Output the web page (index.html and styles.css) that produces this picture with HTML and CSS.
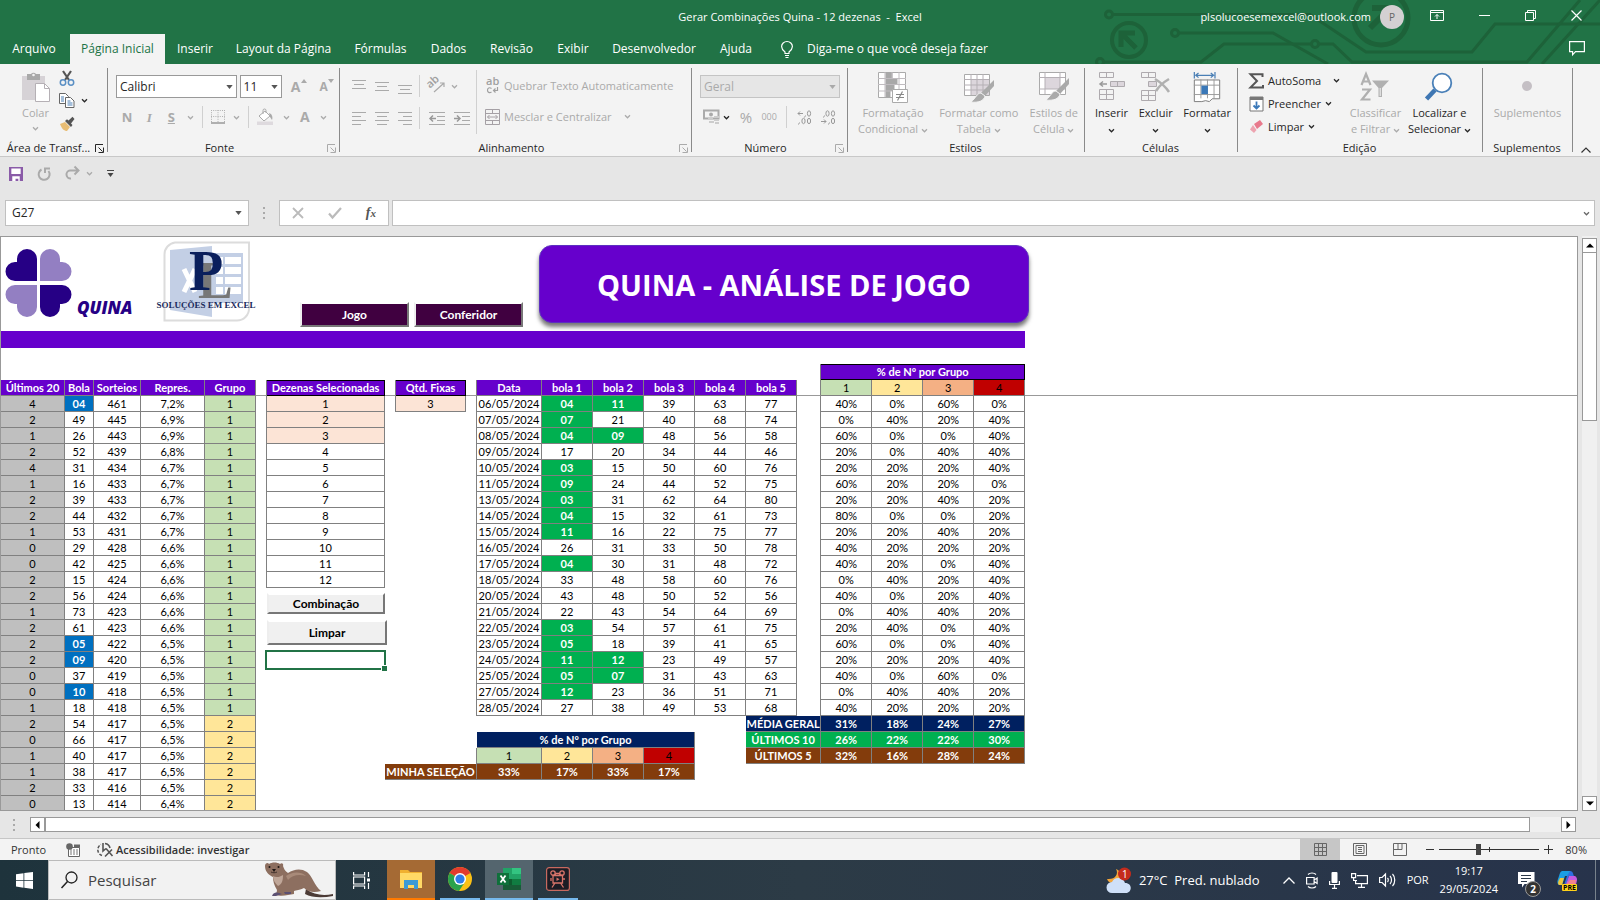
FILE: index.html
```html
<!DOCTYPE html>
<html lang="pt-BR">
<head>
<meta charset="utf-8">
<title>Gerar Combinações Quina - 12 dezenas - Excel</title>
<link rel="stylesheet" href="styles.css">
</head>
<body>
<svg class="defs" aria-hidden="true">
  <symbol id="chev" viewBox="0 0 8 6"><path d="M1 1.500 4 4.500 7 1.500" fill="none" stroke="currentColor" stroke-width="1.500"/></symbol>
  <symbol id="tri" viewBox="0 0 8 5"><path d="M0 0h8L4 5z" fill="currentColor"/></symbol>
  <symbol id="launch" viewBox="0 0 9 9"><path d="M.5 8V.5H8M3.500 3.500 7.500 7.500M8.500 3.500v5h-5" fill="none" stroke="currentColor"/></symbol>
</svg>

<header class="top">
  <svg class="circuit" viewBox="0 0 540 64" aria-hidden="true">
    <g fill="none" stroke="#1d6239" stroke-width="3">
      <circle cx="49" cy="14.500" r="3.500"/><path d="M53 14.500H250L306 52H412L435 24H540"/>
      <circle cx="115" cy="33" r="3.500"/><path d="M119 33H213L268 64"/>
      <circle cx="255" cy="44" r="3.500"/><path d="M251 44H164L141 62H44M259 44H273L292 62H467L520 0M482 64 540 0"/>
      <circle cx="40" cy="62" r="3.500"/>
      <circle cx="69" cy="40" r="17" stroke-width="4"/><path d="M61 47V33H75M62 34 76 48" stroke-width="5"/>
      <circle cx="321" cy="18" r="27" stroke-width="5"/><path d="M312 8H330V26M329 9 310 28" stroke-width="6"/>
    </g>
  </svg>
  <div class="title-row">
    <h1 class="title">Gerar Combinações Quina - 12 dezenas &nbsp;-&nbsp; Excel</h1>
    <div class="account"><span>plsolucoesemexcel@outlook.com</span><span class="avatar">P</span></div>
    <div class="win">
      <button aria-label="Opções da faixa"><svg width="14" height="11" viewBox="0 0 14 11"><path d="M.5.500h13v10H.5zM.5 2.500h13M7 9V4.500M5 6.500l2-2 2 2" fill="none" stroke="#fff"/></svg></button>
      <button aria-label="Minimizar"><svg width="11" height="11" viewBox="0 0 11 11"><path d="M0 5.500h11" stroke="#fff"/></svg></button>
      <button aria-label="Restaurar"><svg width="11" height="11" viewBox="0 0 11 11"><path d="M.5 2.500h8v8h-8zM2.500 2.500v-2h8v8h-2" fill="none" stroke="#fff"/></svg></button>
      <button aria-label="Fechar"><svg width="11" height="11" viewBox="0 0 11 11"><path d="M.5.500l10 10M10.500.500l-10 10" stroke="#fff" stroke-width="1.200"/></svg></button>
    </div>
  </div>
  <div class="tab-row">
    <nav class="tabs">
      <button>Arquivo</button><button class="on">Página Inicial</button><button>Inserir</button><button>Layout da Página</button><button>Fórmulas</button><button>Dados</button><button>Revisão</button><button>Exibir</button><button>Desenvolvedor</button><button>Ajuda</button>
      <button class="tell"><svg width="12" height="17" viewBox="0 0 12 17"><path d="M4 12.500V11C1.500 9 .6 7.500.6 5.500a5.400 5 0 0 1 10.800 0C11.400 7.500 10.500 9 8 11v1.500zM4 14.500h4M4.500 16.500h3" fill="none" stroke="#fff" stroke-width="1.200"/></svg>Diga-me o que você deseja fazer</button>
    </nav>
    <button class="comment" aria-label="Comentários"><svg width="16" height="15" viewBox="0 0 16 15"><path d="M.6.600h14.800v10H6.500L3.600 13.800V10.600h-3z" fill="none" stroke="#fff" stroke-width="1.200"/></svg></button>
  </div>
</header>

<section class="ribbon">
  <div class="group g-clip">
    <div class="body">
      <button class="big dis"><svg width="30" height="31" viewBox="0 0 30 31"><path d="M1 4h23v24H1z" fill="#d6d2d6"/><path d="M6 2h4a3 3 0 0 1 5 0h4v6H6z" fill="#a9a9a9"/><circle cx="12.500" cy="3" r="1.300" fill="#f3f3f3"/><path d="M14.500 11.500h9l5 5v13h-14z" fill="#fff" stroke="#b5b0b5"/><path d="M23.500 11.500v5h5" fill="none" stroke="#b5b0b5"/></svg><span>Colar</span><svg class="cv"><use href="#chev"/></svg></button>
      <div class="stack">
        <button aria-label="Recortar"><svg width="16" height="16" viewBox="0 0 16 16"><path d="M4 1l6 9M12 1 6 10" stroke="#555" stroke-width="2.200"/><circle cx="4" cy="12.500" r="2.700" fill="none" stroke="#5a8fc4" stroke-width="1.500"/><circle cx="12" cy="12.500" r="2.700" fill="none" stroke="#5a8fc4" stroke-width="1.500"/></svg></button>
        <button aria-label="Copiar"><svg width="16" height="15" viewBox="0 0 16 15"><path d="M.5.500h6l3 3v7h-9z" fill="#fff" stroke="#666"/><path d="M6.500 4.500h5l3.500 3.500v6.500H6.500z" fill="#fff" stroke="#666"/><path d="M2 4h3M2 6h3M2 8h3M8.500 8h3M8.500 10h5M8.500 12h5" stroke="#4a7fb5"/></svg><svg class="cv"><use href="#chev"/></svg></button>
        <button aria-label="Pincel"><svg width="16" height="16" viewBox="0 0 16 16"><path d="M1 8l5-2 5 5-3 4c-3 0-5-2-7-7z" fill="#e8bd74"/><path d="M6 5l6 6 1.500-2L12 7.500 15.500 3 13.500.800 9.500 4.500 8 3.200z" fill="#555"/></svg></button>
      </div>
    </div>
    <div class="label"><span>Área de Transf...</span><svg class="la"><use href="#launch"/></svg></div>
  </div>

  <div class="group g-font">
    <div class="body rows">
      <div class="line">
        <span class="combo w-font"><select aria-label="Fonte"><option>Calibri</option></select><svg class="tr"><use href="#tri"/></svg></span>
        <span class="combo w-size"><select aria-label="Tamanho"><option>11</option></select><svg class="tr"><use href="#tri"/></svg></span>
        <button class="dis grow" aria-label="Aumentar fonte"><b class="fa">A</b><svg width="6" height="4" viewBox="0 0 6 4"><path d="M0 4h6L3 0z" fill="#aaa"/></svg></button>
        <button class="dis grow" aria-label="Diminuir fonte"><b class="fb">A</b><svg width="6" height="4" viewBox="0 0 6 4"><path d="M0 0h6L3 4z" fill="#aaa"/></svg></button>
      </div>
      <div class="line line2 dis">
        <button class="ltr"><b>N</b></button><button class="ltr"><i>I</i></button><button class="ltr"><u>S</u></button><svg class="cv"><use href="#chev"/></svg><span class="vs"></span>
        <button aria-label="Bordas"><svg width="14" height="14" viewBox="0 0 14 14"><path d="M.5 0v13M7 0v13M13.500 0v13M0 .5h14M0 6.500h14" stroke="#b0b0b0" stroke-dasharray="1 1.200" fill="none"/><path d="M0 13h14" stroke="#999" stroke-width="1.500"/></svg></button><svg class="cv"><use href="#chev"/></svg><span class="vs"></span>
        <button aria-label="Preenchimento"><svg width="17" height="16" viewBox="0 0 17 16"><path d="M2 7l6-5 5 5-6 5z" fill="#fff" stroke="#aaa"/><path d="M6 5V1.500a1.500 1.500 0 0 1 3 0V4" fill="none" stroke="#aaa"/><path d="M12 4c3 1 4 4 3 7l-2-3z" fill="#aaa"/><path d="M0 12.500h16V16H0z" fill="#dedade"/></svg></button><svg class="cv"><use href="#chev"/></svg>
        <button class="ltr"><b class="fa">A</b></button><svg class="cv"><use href="#chev"/></svg>
      </div>
    </div>
    <div class="label"><span>Fonte</span><svg class="la dis"><use href="#launch"/></svg></div>
  </div>

  <div class="group g-align">
    <div class="body cols dis">
      <div class="al-left">
        <div class="al-row"><svg width="14" height="12" viewBox="0 0 14 12"><path d="M0 .5h14M2 4.500h10M0 8.500h14" stroke="#aaa"/></svg><svg width="14" height="12" viewBox="0 0 14 12"><path d="M0 2.500h14M2 6.500h10M0 10.500h14" stroke="#aaa"/></svg><svg width="14" height="16" viewBox="0 0 14 16"><path d="M0 7.500h14M2 11.500h10M0 15.500h14" stroke="#aaa"/></svg><span class="vs"></span><svg width="16" height="16" viewBox="0 0 16 16"><text x="0" y="8" font-size="11" font-weight="600" transform="rotate(-42 4 8)" fill="#a0a0a0">ab</text><path d="M5 14 14.500 5.500M11 5h4v4" fill="none" stroke="#aaa" stroke-width="1.200"/></svg><svg class="cv"><use href="#chev"/></svg></div>
        <div class="al-row"><svg width="14" height="13" viewBox="0 0 14 13"><path d="M0 .5h14M0 4.500h9M0 8.500h14M0 12.500h9" stroke="#aaa"/></svg><svg width="14" height="13" viewBox="0 0 14 13"><path d="M0 .5h14M2 4.500h10M0 8.500h14M2 12.500h10" stroke="#aaa"/></svg><svg width="14" height="13" viewBox="0 0 14 13"><path d="M0 .5h14M5 4.500h9M0 8.500h14M5 12.500h9" stroke="#aaa"/></svg><span class="vs"></span><svg width="16" height="13" viewBox="0 0 16 13"><path d="M0 .5h16M8 4.500h8M8 8.500h8M0 12.500h16" stroke="#aaa"/><path d="M7 6.500H1M4 3.500l-3 3 3 3" fill="none" stroke="#999" stroke-width="1.500"/></svg><svg width="16" height="13" viewBox="0 0 16 13"><path d="M0 .5h16M8 4.500h8M8 8.500h8M0 12.500h16" stroke="#aaa"/><path d="M0 6.500h6M3 3.500l3 3-3 3" fill="none" stroke="#999" stroke-width="1.500"/></svg></div>
      </div>
      <div class="al-right">
        <button><svg width="15" height="16" viewBox="0 0 15 16"><text x="1" y="7" font-size="11" font-weight="600" fill="#a0a0a0">ab</text><path d="M6.500 10.500C4.500 9 2.500 10 2.500 12.200S4.500 15.300 6.500 14M12.500 9v3.500H8.500M10.500 10.500l-2 2 2 2" fill="none" stroke="#a0a0a0" stroke-width="1.200"/></svg>Quebrar Texto Automaticamente</button>
        <button><svg width="15" height="16" viewBox="0 0 15 16"><path d="M.5.500h14v15H.5zM.5 4.500h14M.5 11.500h14M7.500.500v4M7.500 11.500v4M2.500 8h10M4.500 6l-2 2 2 2M10.500 6l2 2-2 2" fill="none" stroke="#a5a0a5"/></svg>Mesclar e Centralizar <svg class="cv far"><use href="#chev"/></svg></button>
      </div>
    </div>
    <div class="label"><span>Alinhamento</span><svg class="la dis"><use href="#launch"/></svg></div>
  </div>

  <div class="group g-num">
    <div class="body rows">
      <div class="line"><span class="combo w-num off"><select aria-label="Formato" disabled><option>Geral</option></select><svg class="tr"><use href="#tri"/></svg></span></div>
      <div class="line line2 dis">
        <svg width="17" height="16" viewBox="0 0 17 16"><path d="M1 1.500h14.500v8H1z" fill="none" stroke="#aaa" stroke-width="2"/><circle cx="8" cy="5.500" r="2" fill="#aaa"/><path d="M5 10h5M6 13h5M11 8h5M11 11h5M12 14h4" stroke="#ccc" stroke-width="2"/></svg><svg class="cv dark"><use href="#chev"/></svg>
        <span class="pct">%</span><span class="mil">000</span><span class="vs"></span>
        <svg width="15" height="15" viewBox="0 0 15 15"><g fill="none" stroke="#999"><path d="M6 3.500H1M3 1.500l-2 2 2 2M8.500 5.500l-1 2M2.500 12.500l-1 2"/><ellipse cx="12" cy="3.500" rx="1.600" ry="2.700"/><ellipse cx="6.500" cy="11" rx="1.600" ry="2.700"/><ellipse cx="12" cy="11" rx="1.600" ry="2.700"/></g></svg>
        <svg width="15" height="15" viewBox="0 0 15 15"><g fill="none" stroke="#999"><path d="M0 11.500h5M3 9.500l2 2-2 2M8.500 12.500l-1 2M3.500 5.500l-1 2"/><ellipse cx="12" cy="3.500" rx="1.600" ry="2.700"/><ellipse cx="6.500" cy="3.500" rx="1.600" ry="2.700"/><ellipse cx="12" cy="11" rx="1.600" ry="2.700"/></g></svg>
      </div>
    </div>
    <div class="label"><span>Número</span><svg class="la dis"><use href="#launch"/></svg></div>
  </div>

  <div class="group g-style">
    <div class="body bigs">
      <button class="big dis"><svg width="30" height="31" viewBox="0 0 30 31"><path d="M.5.500h27v25H.5z" fill="#fff" stroke="#aaa"/><path d="M7.500 0h7v6h-7zM7.500 7h12v5h-12zM7.500 13h9v6h-9zM7.500 19h5v6h-5z" fill="#a8a8a8"/><path d="M7 0v25M14 0v7M21 0v25M0 6.500h28M0 12.500h28M0 19h28" stroke="#c0bcc0"/><path d="M14.500 17.500h15v13h-15z" fill="#fff" stroke="#aaa"/><path d="M18 22.500h8M18 25.500h8M24.500 19.500l-5 9" stroke="#888" stroke-width="1.200"/></svg><span>Formatação</span><span>Condicional <svg class="cv"><use href="#chev"/></svg></span></button>
      <button class="big dis"><svg width="30" height="31" viewBox="0 0 30 31"><path d="M.5 2.500h25v21H.5z" fill="#fff" stroke="#aaa"/><path d="M7 7h18v16H7z" fill="#dcd6dc"/><path d="M7 2v21M13 2v21M19 2v21M0 7.500h25M0 13h25M0 18h25" stroke="#b5b0b5"/><path d="M30 8v6l-9 10-4-3z" fill="#aaa"/><path d="M17 21c-4 0-5 5-10 9 7 1 13-1 14-6z" fill="#aaa" stroke="#f3f3f3"/></svg><span>Formatar como</span><span>Tabela <svg class="cv"><use href="#chev"/></svg></span></button>
      <button class="big dis"><svg width="30" height="31" viewBox="0 0 30 31"><path d="M.5.500h26v22H.5z" fill="#fff" stroke="#aaa"/><path d="M6 6h15v11H6z" fill="#dcd6dc"/><path d="M6 0v22M21 0v22M0 5.500h26M0 17h26" stroke="#b5b0b5"/><path d="M30 6v6l-9 10-4-3z" fill="#aaa"/><path d="M17 19c-4 0-5 5-10 9 7 1 13-1 14-6z" fill="#aaa" stroke="#f3f3f3"/></svg><span>Estilos de</span><span>Célula <svg class="cv"><use href="#chev"/></svg></span></button>
    </div>
    <div class="label"><span>Estilos</span></div>
  </div>

  <div class="group g-cell">
    <div class="body bigs">
      <button class="big"><svg width="28" height="31" viewBox="0 0 28 31"><g fill="none" stroke="#aeaaae"><path d="M1.500.500h14v5h-14zM8.500.500v5M1.500 17.500h14v10h-14zM8.500 17.500v10M1.500 22.500h14"/><path d="M12.500 9.500h14v5h-14zM19.500 9.500v5" fill="#dcd6dc"/><path d="M9 12H2M5 9.500 2 12l3 2.500" stroke="#999" stroke-width="1.500"/></g></svg><span>Inserir</span><span><svg class="cv"><use href="#chev"/></svg></span></button>
      <button class="big"><svg width="30" height="31" viewBox="0 0 30 31"><g fill="none" stroke="#aeaaae"><path d="M.5.500h14v5H.5zM7.500.500v5M.5 18.500h14v10H.5zM7.500 18.500v10M.5 23.500h14"/><path d="M7.500 9.500h8v5h-8z" fill="#dcd6dc"/><path d="M14 7c5 3 10 7 14 13M28 7c-5 3-10 7-13 12" stroke="#b0b0b0" stroke-width="2.500"/></g></svg><span>Excluir</span><span><svg class="cv"><use href="#chev"/></svg></span></button>
      <button class="big"><svg width="30" height="33" viewBox="0 0 30 33"><path d="M1.500 0v7M23.500 0v7M3 3.500h19M6 1 3 3.500 6 6M19 1l3 2.500L19 6" fill="none" stroke="#4a7fb5" stroke-width="1.300"/><path d="M1.500 8.500h27v20h-8l-3 3-4-1-4 1h-8z" fill="#fff" stroke="#777"/><path d="M8.500 8v20M15.500 8v20M22.500 8v20M1 14h27M1 24h27" stroke="#999"/><path d="M9 14.500h7v9H9z" fill="#3a78b8"/></svg><span>Formatar</span><span><svg class="cv"><use href="#chev"/></svg></span></button>
    </div>
    <div class="label"><span>Células</span></div>
  </div>

  <div class="group g-edit">
    <div class="body">
      <div class="edit-list">
        <button><svg width="15" height="16" viewBox="0 0 15 16"><path d="M13.500 4V1.200H1.500L8 8 1.500 14.500h12.500V12" fill="none" stroke="#555" stroke-width="2"/></svg>AutoSoma <svg class="cv far"><use href="#chev"/></svg></button>
        <button><svg width="15" height="16" viewBox="0 0 15 16"><path d="M1 1h13v14H1z" fill="#fff" stroke="#777"/><path d="M1 1h13v3H1z" fill="#777"/><path d="M7.500 5.500v7M4.500 9.500l3 3 3-3" fill="none" stroke="#3a78b8" stroke-width="1.800"/></svg>Preencher <svg class="cv"><use href="#chev"/></svg></button>
        <button><svg width="15" height="14" viewBox="0 0 15 14"><path d="M5 4l6-4 3 4-6 5z" fill="#e8798c"/><path d="M4 5l3.500 5L5 13 1 9.500z" fill="#eda4b0"/></svg>Limpar <svg class="cv"><use href="#chev"/></svg></button>
      </div>
      <button class="big dis"><svg width="30" height="31" viewBox="0 0 30 31"><path d="M1.500 13 6 2l4.500 11M3.300 9.500h5.400M2 17.500h8L2 27.500h8.500" fill="none" stroke="#b0b0b0" stroke-width="2.200"/><path d="M12 8.500h17L22 16v9h-3.500v-9z" fill="#b0b0b0"/><path d="M19.700 16h1v8h-1z" fill="#f3f3f3"/></svg><span>Classificar</span><span>e Filtrar <svg class="cv"><use href="#chev"/></svg></span></button>
      <button class="big"><svg width="30" height="31" viewBox="0 0 30 31"><path d="M11 18 2.500 27" stroke="#3f77b3" stroke-width="4.500"/><circle cx="18" cy="11" r="9.300" fill="#fff" stroke="#4a80b8" stroke-width="1.800"/></svg><span>Localizar e</span><span>Selecionar <svg class="cv"><use href="#chev"/></svg></span></button>
    </div>
    <div class="label"><span>Edição</span></div>
  </div>

  <div class="group g-sup">
    <div class="body bigs"><button class="big dis"><svg width="30" height="31" viewBox="0 0 30 31"><circle cx="15" cy="14" r="5" fill="#c4bfc4"/></svg><span>Suplementos</span></button></div>
    <div class="label"><span>Suplementos</span></div>
  </div>
  <button class="collapse" aria-label="Recolher"><svg width="10" height="6" viewBox="0 0 10 6"><path d="M.5 5.500 5 1l4.500 4.500" fill="none" stroke="#333" stroke-width="1.200"/></svg></button>
</section>

<div class="qat">
  <button aria-label="Salvar"><svg width="14" height="14" viewBox="0 0 15 15"><path d="M0 0h15v15H0z" fill="#8a5ba8"/><path d="M2.500 1.500h10v6h-10zM3.500 10h8v5h-1.500v-2.500H7V15H3.500z" fill="#fff"/></svg></button>
  <button aria-label="Desfazer"><svg width="14" height="14" viewBox="0 0 14 14"><path d="M4.500 2.500a5.500 5.500 0 1 0 7 1.500M8 6V1.500h5" fill="none" stroke="#aaa" stroke-width="2"/></svg></button>
  <button class="dis" aria-label="Refazer"><svg width="15" height="15" viewBox="0 0 15 15"><path d="M6 12.500a4 4 0 0 1-1-8h8.500M9.500.500l4 4-4 4" fill="none" stroke="#aaa" stroke-width="2"/></svg><svg class="cv"><use href="#chev"/></svg></button>
  <button aria-label="Personalizar"><svg width="7" height="8" viewBox="0 0 7 8"><path d="M0 .5h7" stroke="#444"/><path d="M.5 3h6L3.500 7z" fill="#444"/></svg></button>
</div>

<div class="formula">
  <span class="namebox"><input value="G27" aria-label="Caixa de nome"><svg class="tr"><use href="#tri"/></svg></span>
  <svg class="dots" width="2" height="12" viewBox="0 0 2 12"><path d="M0 0h2v2H0zM0 5h2v2H0zM0 10h2v2H0z" fill="#aaa"/></svg>
  <div class="fx">
    <button aria-label="Cancelar"><svg width="12" height="12" viewBox="0 0 12 12"><path d="M1 1l10 10M11 1 1 11" stroke="#bbb" stroke-width="1.800"/></svg></button>
    <button aria-label="Inserir"><svg width="14" height="12" viewBox="0 0 14 12"><path d="M1 6.500 4.500 10.500 13 1" fill="none" stroke="#bbb" stroke-width="2.200"/></svg></button>
    <button class="fxi" aria-label="Inserir função"><i>f<small>x</small></i></button>
  </div>
  <span class="fbar"><input aria-label="Barra de fórmulas"><svg class="cv"><use href="#chev"/></svg></span>
</div>

<main class="work">
  <div class="sheet">
    <div class="art">
      <div class="quina">
        <svg width="67" height="68" viewBox="0 0 67 68">
          <path d="M32 32V10a10 10 0 0 0-20 0v3H10a9.500 9.500 0 0 0 0 19z" fill="#260085"/>
          <path d="M35 32V10a10 10 0 0 1 20 0v3h2a9.500 9.500 0 0 1 0 19zM32 36v22a10 10 0 0 1-20 0v-3H10a9.500 9.500 0 0 1 0-19z" fill="#937fc2"/>
          <path d="M35 36v22a10 10 0 0 0 20 0v-3h2a9.500 9.500 0 0 0 0-19z" fill="#260085"/>
        </svg>
        <span>QUINA</span>
      </div>
      <svg class="pl" width="98" height="82" viewBox="0 0 98 82" role="img" aria-label="PL Soluções em Excel">
        <path d="M16 1.500h74v66a12 12 0 0 1-12 12H5.500v-66a12 12 0 0 1 10.500-12z" fill="#fff" stroke="#dcdcdc" stroke-width="2"/>
        <path d="M11 9 53 5v71L11 69z" fill="#c3cfe5"/><path d="M53 12h31v50H53z" fill="#c3cfe5"/>
        <path d="M57 16h7v7h-7zM66 16h16v7H66zM57 26h7v7h-7zM66 26h16v7H66zM57 36h7v7h-7zM66 36h16v7H66zM57 46h7v7h-7zM66 46h16v7H66z" fill="#fff"/>
        <path d="M25 28 36 51M36 28 25 51" stroke="#fff" stroke-width="5"/>
        <text x="39" y="57" class="pl-l">L</text><text x="30" y="49" class="pl-p">P</text>
        <text x="47" y="67" class="pl-t" text-anchor="middle">SOLUÇÕES EM EXCEL</text>
      </svg>
      <button class="xl dark-btn">Jogo</button>
      <button class="xl dark-btn">Conferidor</button>
      <h2 class="banner">QUINA - ANÁLISE DE JOGO</h2>
    </div>
    <div class="bar"></div>
    <table class="grid">
      <colgroup id="cols"></colgroup>
      <tbody id="rows"></tbody>
    </table>
  </div>
  <div class="vscroll">
    <button aria-label="Acima"><svg width="8" height="5" viewBox="0 0 8 5"><path d="M0 4.500h8L4 .5z"/></svg></button>
    <span class="vthumb"></span><span class="vtrack"></span>
    <button aria-label="Abaixo"><svg width="8" height="5" viewBox="0 0 8 5"><path d="M0 .5h8l-4 4z"/></svg></button>
  </div>
</main>

<div class="hscroll">
  <svg class="dots" width="2" height="12" viewBox="0 0 2 12"><path d="M0 0h2v2H0zM0 5h2v2H0zM0 10h2v2H0z" fill="#aaa"/></svg>
  <button aria-label="Esquerda"><svg width="5" height="8" viewBox="0 0 5 8"><path d="M4.500 0v8l-4-4z"/></svg></button>
  <span class="hthumb"></span><span class="htrack"></span>
  <button aria-label="Direita"><svg width="5" height="8" viewBox="0 0 5 8"><path d="M.5 0v8l4-4z"/></svg></button>
</div>

<footer class="status">
  <span>Pronto</span>
  <svg class="rec" width="14" height="14" viewBox="0 0 14 14"><path d="M2.500 4.500h11v9h-11z" fill="#fff" stroke="#666"/><path d="M8 1.500h6v3H8z" fill="#666"/><path d="M4 7h8M4 9h8M4 11h8" stroke="#777" stroke-dasharray="2 1"/><circle cx="3.500" cy="3.500" r="3.300" fill="#666"/></svg>
  <button class="acc"><svg width="16" height="15" viewBox="0 0 16 15"><path d="M5 13.500A6 6 0 0 1 4 2.500" fill="none" stroke="#555" stroke-width="1.500" stroke-dasharray="3 1.500"/><path d="M6 1v8l3-2.500M9 6.500l6.500 7.500M15 7.500 8 14.500M8 1.500c3 .5 4.500 2 5 4.500" fill="none" stroke="#555" stroke-width="1.600"/></svg>Acessibilidade: investigar</button>
  <div class="views">
    <button class="sel" aria-label="Normal"><svg width="13" height="13" viewBox="0 0 13 13"><path d="M.5.500h12v12H.5zM4.500 0v13M8.500 0v13M0 4.500h13M0 8.500h13" fill="none" stroke="#666"/></svg></button>
    <button aria-label="Layout"><svg width="14" height="13" viewBox="0 0 14 13"><path d="M.5.500h13v12H.5zM3 2.500h8v8H3zM5 4.500h4M5 6.500h4M5 8.500h4" fill="none" stroke="#666"/></svg></button>
    <button aria-label="Quebras"><svg width="14" height="13" viewBox="0 0 14 13"><path d="M.5.500h13v12H.5zM5 0v6.500M9 0v6.500M0 6.500h9" fill="none" stroke="#666"/></svg></button>
  </div>
  <button class="zm" aria-label="Reduzir"><svg width="8" height="9" viewBox="0 0 8 9"><path d="M0 4.500h8" stroke="#333"/></svg></button>
  <input class="zoom" type="range" min="0" max="100" value="39" aria-label="Zoom">
  <button class="zm" aria-label="Ampliar"><svg width="9" height="9" viewBox="0 0 9 9"><path d="M0 4.500h9M4.500 0v9" stroke="#333"/></svg></button>
  <span class="pc">80%</span>
</footer>

<div class="task">
  <button class="start" aria-label="Iniciar"><svg width="17" height="17" viewBox="0 0 17 17"><path d="M0 2.300 7.500 1.200v6.800H0zM8.300 1.100 17 0v8H8.300zM0 8.800h7.500v6.900L0 14.600zM8.300 8.800H17V17l-8.700-1.200z" fill="#fff"/></svg></button>
  <label class="search"><svg width="17" height="18" viewBox="0 0 17 18"><circle cx="10.500" cy="6.500" r="5.500" fill="none" stroke="#222" stroke-width="1.300"/><path d="M6.500 10.500.5 17" stroke="#222" stroke-width="1.500"/></svg><input placeholder="Pesquisar" aria-label="Pesquisar">
    <svg width="70" height="36" viewBox="0 0 70 36"><path d="M42 27c8 6 17 7 27 5v2c-10 2-21 2-28-2z" fill="#4c3b36"/><path d="M1 4C1 1 4 0 5 2c3-2 8-2 11 0 2-2 4 0 3 2 1 3 2 5 5 7 6-4 13-5 19-1 6 5 7 13 14 19-7 2-13 1-17-3-4 2-8 2-10 3v3l-6 1c-4 1-9 1-12 0 0-2 1-3 1-5-3-5-4-9-4-13C5 13 1 10 1 4z" fill="#8d6f60"/><path d="M9 14c3 2 7 1 10-1 0 6-1 9-5 11-3-3-5-6-5-10z" fill="#c0a799"/><path d="M22 14c6-4 14-5 20 0-7-2-14-1-18 4z" fill="#a88a79"/><path d="M9 32c4-3 6-1 9 0l-6 2H8zM20 30l7 0v2h-6z" fill="#5c5072"/><path d="M8 7h4l-2 3z" fill="#1d1514"/><circle cx="5.500" cy="5" r="1" fill="#1d1514"/><circle cx="14.500" cy="5" r="1" fill="#1d1514"/><path d="M7 10c2 1 4 1 6 0" fill="none" stroke="#40302b"/></svg>
  </label>
  <button class="tv" aria-label="Visão de tarefas"><svg width="17" height="17" viewBox="0 0 17 17"><path d="M.6 0v3h11V0M.6 5h11v7H.6zM.6 17v-3h11v3M15.500 0v5M15.500 11v6" fill="none" stroke="#fff" stroke-width="1.200"/><path d="M14 6.500h3v3h-3z" fill="#fff"/></svg></button>
  <button class="app ex" aria-label="Explorador"><svg width="24" height="20" viewBox="0 0 24 20"><path d="M1 1h8l2 2h12v4H1z" fill="#f0b030"/><path d="M1 4h22v15H1z" fill="#ffd966"/><path d="M5 20v-9h14v9h-4v-4H9v4z" fill="#3c9ad6"/></svg></button>
  <button class="app ch" aria-label="Chrome"><svg width="24" height="24" viewBox="0 0 24 24"><circle cx="12" cy="12" r="12" fill="#fbc116"/><path d="M12 12 1.600 6A12 12 0 0 1 22.400 6z" fill="#e33b2e"/><path d="M1.600 6A12 12 0 0 0 11 24l6-9-5-3z" fill="#2ba24c"/><circle cx="12" cy="12" r="6" fill="#fff"/><circle cx="12" cy="12" r="4.600" fill="#2f7de9"/></svg></button>
  <button class="app xc" aria-label="Excel"><svg width="24" height="22" viewBox="0 0 24 22"><path d="M6 0h18v22H6z" fill="#21a366"/><path d="M15 0h9v6h-9z" fill="#33c481"/><path d="M6 11h9v6H6z" fill="#0e5c2f"/><path d="M15 11h9v6h-9z" fill="#107c41"/><path d="M6 17h18v5H6z" fill="#185c37"/><path d="M0 5h12v12H0z" fill="#0f703b"/><path d="M3.500 7.500l5 7M8.500 7.500l-5 7" stroke="#fff" stroke-width="1.800"/></svg></button>
  <button class="app rc" aria-label="Gravador"><svg width="24" height="24" viewBox="0 0 24 24"><rect x=".6" y=".6" width="22.800" height="22.800" rx="2.500" fill="#1c1c24" stroke="#c8695f" stroke-width="1.200"/><g fill="none" stroke="#d8746a" stroke-width="1.300"><circle cx="7" cy="6" r="2.200"/><circle cx="16" cy="6" r="2.200"/><path d="M7 8.500h9.500v7.500H7zM16.500 12h2.500M9 16l-3 4.500M14.500 16l3 4.500M5 11v3M8.500 8l1.500-1.500h3L14.500 8"/></g><path d="M10.500 10.500l3 1.700-3 1.700z" fill="#d8746a"/></svg></button>
  <div class="tray">
    <svg width="26" height="27" viewBox="0 0 26 27"><path d="M10 2c3 5-1 11-9 10 2 6 12 6 14-1 1-5-2-8-5-9z" fill="#f3a63a"/><path d="M6 26a5.500 5.500 0 0 1 0-11 7 7 0 0 1 13 1c8 0 7 10 1 10z" fill="#cfe0f8"/><circle cx="18.500" cy="7" r="6.500" fill="#c42b1c"/><text x="16" y="11" font-size="10" fill="#fff">1</text></svg>
    <span class="wt">27°C &nbsp;Pred. nublado</span>
    <svg width="12" height="7" viewBox="0 0 12 7"><path d="M.5 6.500 6 1l5.500 5.500" fill="none" stroke="#fff" stroke-width="1.300"/></svg>
    <svg width="12" height="17" viewBox="0 0 12 17"><path d="M.6 5.500h7.500v6.500H.6zM8.100 8l3-2v5.500l-3-2M2 2.500c2-2 6-2 8 0M2 14.500c2 2 6 2 8 0" fill="none" stroke="#fff" stroke-width="1.200"/></svg>
    <svg width="11" height="17" viewBox="0 0 11 17"><rect x="2.500" width="6" height="11" rx="1" fill="#fff"/><path d="M.6 9v3.500h9.800V9M5.500 13v3M3 16.400h5" fill="none" stroke="#fff" stroke-width="1.200"/></svg>
    <svg width="17" height="15" viewBox="0 0 17 15"><path d="M6 2.600h10.400v8H4.600V7M10.500 11v3M7 14.300h7M.6.600h4v4h-4zM2.600 5v2.500H6" fill="none" stroke="#fff" stroke-width="1.200"/></svg>
    <svg width="17" height="14" viewBox="0 0 17 14"><path d="M.6 4.500h2.500L6.500 1v12L3.100 9.500H.6zM8.500 5c1 1 1 3 0 4M11 3c2 2 2 6 0 8M13.500 1c3 3 3 9 0 12" fill="none" stroke="#fff" stroke-width="1.200"/></svg>
    <span class="por">POR</span>
    <span class="clock"><span>19:17</span><span>29/05/2024</span></span>
    <span class="notif"><svg width="17" height="17" viewBox="0 0 17 17"><path d="M0 0h16.500v12H6.500L4 15.500V12H0z" fill="#fff"/><path d="M3 3.500h10M3 6.500h10M3 9.500h6" stroke="#2b3848" stroke-width="1.200"/></svg><b>2</b></span>
    <span class="cop"><svg width="21" height="19" viewBox="0 0 21 19"><path d="M5 0h8l2 5H8L5 14H2C-1 12 1 8 2 5 3 2 3 1 5 0z" fill="#1b9de2"/><path d="M3 7h4l-2 7H2C0 12 2 9 3 7z" fill="#f0c63a"/><path d="M13 0c3 0 3 3 4 5h-5L9 14H7l3-9z" fill="#2f6fe0"/><path d="M12 5h6c3 2 2 5 1 8H9z" fill="#c55be0"/><path d="M13 9h6l-1 5H9z" fill="#f2828e"/></svg><b>PRE</b></span>
    <span class="desk"></span>
  </div>
</div>
<script src="app.js"></script>
</body>
</html>
```
FILE: styles.css
```css
* { box-sizing: border-box; }
body { margin: 0; height: 100vh; display: flex; flex-direction: column; overflow: hidden; background: #e6e6e6; font: 11px/16px "Open Sans", "Noto Sans", sans-serif; color: #262626; }
button { border: 0; background: none; padding: 0; margin: 0; font: inherit; color: inherit; }
input, select { font: inherit; color: inherit; border: 0; background: none; padding: 0; margin: 0; outline: 0; min-width: 0; }
svg { display: block; flex: none; overflow: visible; }
.defs { width: 0; height: 0; position: absolute; }
.cv { width: 7px; height: 5px; display: inline-block; }
.tr { width: 7px; height: 4px; color: #555; }
.la { width: 9px; height: 9px; }
.dis { color: #aaa; }
.dark { color: #222; }

/* title bar and tabs */
.top { position: relative; background: #217346; color: #fff; flex: none; }
.circuit { position: absolute; right: 0; top: 0; width: 540px; height: 64px; overflow: hidden; }
.title-row { position: relative; display: grid; grid-template-columns: 1fr auto 1fr; height: 34px; align-items: center; }
.title { grid-column: 2; margin: 0; font-size: 11px; font-weight: 400; }
.account { display: flex; align-items: center; justify-content: flex-end; gap: 9px; grid-column: 3; padding-right: 196px; }
.avatar { width: 24px; height: 24px; border-radius: 50%; background: #d4d0d2; color: #666; text-align: center; line-height: 24px; font-size: 10px; }
.win { position: absolute; right: 18px; top: 10px; display: flex; gap: 35px; align-items: center; }
.tab-row { position: relative; display: flex; justify-content: space-between; height: 30px; }
.tabs { display: grid; grid-template-columns: 68px 97px 60px 117px 77px 59px 67px 56px 106px 58px auto; font-size: 12px; }
.tabs button { white-space: nowrap; }
.tabs .on { background: #f3f3f3; color: #217346; margin-left: 2px; }
.tabs .tell { display: flex; align-items: center; gap: 14px; padding-left: 16px; }
.comment { padding: 0 15px 2px 0; }

/* ribbon */
.ribbon { display: flex; align-items: flex-start; flex: none; background: #f3f3f3; border-bottom: 1px solid #c8c8c8; height: 93px; padding-top: 4px; }
.group { display: flex; flex-direction: column; border-right: 1px solid #8a8a8a; flex: none; height: 84px; }
.body { display: flex; height: 72px; flex: none; }
.label { display: flex; align-items: center; height: 16px; flex: none; padding: 0 5px 0 4px; }
.label span { flex: 1; text-align: center; white-space: nowrap; }
.big { display: flex; flex-direction: column; align-items: center; padding-top: 4px; white-space: nowrap; }
.big > svg:first-child { margin-bottom: 2px; height: 31px; }
.big > span { line-height: 16px; height: 16px; }
.g-clip { width: 108px; }
.g-clip .body { padding-left: 16px; gap: 4px; }
.g-clip .big { width: 39px; }
.g-clip .big .cv { margin-top: 5px; }
.g-clip .label { padding: 0 3px 0 2px; }
.stack { display: flex; flex-direction: column; gap: 8px; padding-top: 2px; }
.stack button { display: flex; align-items: center; gap: 6px; height: 15px; }
.g-font { width: 232px; }
.g-font .label { padding-right: 3px; }
.rows { flex-direction: column; }
.line { display: flex; align-items: center; padding: 7px 0 0 8px; gap: 3px; height: 30px; }
.line2 { height: 38px; padding-top: 0; gap: 8px; }
.combo, .namebox, .fbar { display: flex; align-items: center; background: #fff; border: 1px solid #999; }
.combo { height: 23px; padding: 0 3px; font-size: 12px; }
.combo select { appearance: none; flex: 1; opacity: 1; }
.w-font { width: 123px; } .w-size { width: 43px; } .w-num { width: 140px; }
.off { background: #e6e6e6; border-color: #c4c4c4; color: #aaa; }
.off .tr { color: #aaa; }
.grow { display: flex; align-items: flex-start; width: 20px; margin-left: 6px; }
.fa { font-size: 14px; } .fb { font-size: 12px; }
.g-font .line2 { justify-content: space-between; padding: 0 12px; gap: 0; }
.ltr { width: 14px; font-size: 13px; }
.ltr i { font-family: "Liberation Serif", serif; font-weight: 700; }
.ltr u { font-weight: 700; }
.vs { width: 1px; height: 22px; background: #d0d0d0; }
.g-align { width: 352px; }
.g-align .label { padding-right: 3px; }
.al-left { display: flex; flex-direction: column; width: 137px; border-right: 1px solid #d0d0d0; margin: 2px 0 6px; padding-left: 12px; }
.al-row { display: flex; align-items: center; gap: 9px; height: 32px; }
.al-row .vs { margin-left: -2px; }
.al-row .cv { margin-left: -3px; }
.al-right { display: flex; flex-direction: column; padding: 2px 0 0 8px; }
.al-right button { display: flex; align-items: center; gap: 4px; height: 31px; white-space: nowrap; }
.g-num { width: 156px; }
.g-num .label { padding-right: 3px; }
.g-num .line2 { padding-left: 11px; padding-right: 11px; justify-content: space-between; gap: 0; }
.g-num .line2 .cv { margin-left: -6px; }
.pct { font-size: 15px; } .mil { font-size: 9px; }
.bigs { justify-content: space-between; padding: 0 6px 0 10px; }
.g-style { width: 237px; }
.g-cell { width: 153px; }
.g-edit { width: 245px; }
.g-edit .body { padding: 0 11px; justify-content: space-between; }
.edit-list { display: flex; flex-direction: column; width: 94px; padding-top: 1px; }
.edit-list button { display: flex; align-items: center; gap: 4px; height: 23px; white-space: nowrap; }
.far { margin-left: 8px; }
.g-sup { width: 90px; }
.g-sup .bigs { justify-content: center; padding: 0; }
.collapse { margin: auto 0 0 auto; padding: 0 9px 3px 0; }

/* quick access and formula bar */
.qat { display: flex; align-items: center; gap: 14px; height: 33px; padding-left: 9px; flex: none; }
.qat button { display: flex; align-items: center; gap: 6px; }
.formula { display: flex; align-items: center; flex: none; margin: 10px 5px 10px; height: 26px; font-size: 12px; }
.namebox { width: 244px; height: 26px; border-color: #c0c0c0; padding: 0 6px; }
.namebox input, .fbar input { flex: 1; }
.formula .dots { margin: 0 14px; }
.fx { display: flex; align-items: center; justify-content: space-around; width: 110px; height: 26px; background: #fff; border: 1px solid #c0c0c0; margin-right: 3px; }
.fxi { font: 700 14px/16px "Liberation Serif", serif; color: #555; }
.fxi small { font-size: 11px; }
.fbar { flex: 1; height: 26px; border-color: #c0c0c0; padding-right: 4px; color: #666; }

/* sheet */
.work { flex: 1; display: flex; min-height: 0; gap: 4px; padding-right: 3px; }
.sheet { flex: 1; min-width: 0; overflow: hidden; background: #fff; border: 1px solid #999; display: flex; flex-direction: column; }
.art { display: flex; height: 94px; flex: none; }
.quina { display: flex; align-items: flex-end; width: 158px; height: 80px; padding-left: 4px; gap: 5px; }
.quina span { font: italic 800 17px/18px "Open Sans", sans-serif; color: #260085; }
.pl { margin-top: 4px; }
.pl-p { font: 700 56px "Liberation Serif", serif; fill: #0a1f5c; }
.pl-l { font: 700 52px "Liberation Serif", serif; fill: #777; }
.pl-t { font: 700 9px "Liberation Serif", serif; fill: #1a2a5c; }
.xl { border: 2px solid; border-color: #fff #777 #777 #eee; background: #f0f0f0; color: #000; font: 700 12px/18px Lato, sans-serif; white-space: nowrap; }
.dark-btn { background: #400040; color: #fff; width: 109px; height: 25px; margin: 65px 5px 0 0; }
.pl + .dark-btn { margin-left: 43px; }
.banner { margin: 8px 0 0 11px; width: 490px; height: 78px; background: #6600cc; border-radius: 13px; border: 1px solid #5c2fc0; box-shadow: 0 4px 4px #777; color: #fff; text-align: center; font: 700 29px/78px "Open Sans", sans-serif; white-space: nowrap; }
.bar { background: #6600cc; width: 1024px; height: 17px; margin-bottom: 16px; flex: none; }
.grid { table-layout: fixed; width: 100%; border-spacing: 0; font: 11px/15px Lato, sans-serif; color: #000; }
.grid td, .grid th { height: 16px; padding: 0; text-align: center; white-space: nowrap; border: 0 solid #808080; position: relative; }
.grid .c { border-width: 0 1px 1px 0; }
.grid .e { border-right-width: 1px; }
.grid .f { border-bottom-width: 1px; border-bottom-color: #999; }
.grid .h { background: #6600cc; color: #fff; font-weight: 700; }
.grid .k { border-color: #000; box-shadow: inset 0 1px #000; }
.grid .gray { background: #bfbfbf; }
.grid .g1 { background: #c6e0b4; }
.grid .g2 { background: #ffe699; }
.grid .g3 { background: #f4b084; }
.grid .g4 { background: #c00000; }
.grid .peach { background: #fce4d6; }
.grid .blue { background: #0070c0; color: #fff; font-weight: 700; }
.grid .hit { background: #00b050; color: #fff; font-weight: 700; }
.grid .navy { background: #002060; color: #fff; font-weight: 700; }
.grid .brown { background: #833c0c; color: #fff; font-weight: 700; }
.over { position: absolute; left: 0; z-index: 1; }
.combi { top: 5px; width: 118px; height: 21px; line-height: 16px; }
.limpar { top: 0; width: 120px; height: 25px; }
.pick { left: -2px; right: -1px; top: -2px; bottom: -2px; border: 2px solid #217346; }
.pick::after { content: ""; position: absolute; right: -3px; bottom: -3px; width: 5px; height: 5px; background: #217346; border: 1px solid #fff; border-width: 1px 0 0 1px; }

/* scroll bars */
.vscroll { width: 15px; display: flex; flex-direction: column; background: #f0f0f0; padding-top: 2px; }
.vscroll button, .hscroll button { width: 15px; height: 15px; border: 1px solid #999; background: #fff; display: grid; place-items: center; flex: none; }
.vthumb { height: 168px; background: #fff; border: 1px solid #999; border-top: 0; }
.vtrack { flex: 1; }
.hscroll { display: flex; align-items: center; height: 27px; flex: none; padding: 0 24px 0 13px; }
.hscroll .dots { margin-right: 15px; }
.hthumb { flex: 1; height: 15px; background: #fff; border: 1px solid #999; }
.htrack { width: 31px; height: 15px; background: #f0f0f0; }

/* status bar */
.status { display: flex; align-items: center; height: 22px; flex: none; background: #f3f3f3; border-top: 1px solid #c6c6c6; padding: 0 13px 0 11px; color: #333; }
.rec { margin: 0 17px 0 20px; }
.acc { display: flex; align-items: center; gap: 3px; font-weight: 600; }
.views { display: flex; margin-left: auto; height: 21px; margin-right: 6px; }
.views button { width: 40px; display: grid; place-items: center; }
.views .sel { background: #c6c6c6; }
.zoom { appearance: none; width: 100px; height: 13px; margin: 0 5px; background: linear-gradient(#333, #333) 50% 50% / 1px 5px no-repeat, linear-gradient(#333, #333) 0 50% / 100% 1px no-repeat; }
.zoom::-webkit-slider-thumb { appearance: none; width: 5px; height: 11px; background: #444; }
.pc { margin-left: 12px; }

/* taskbar */
.task { display: flex; height: 40px; flex: none; background: linear-gradient(90deg, #1e333c, #2c3b46 50%, #27334b); color: #fff; }
.task > button { display: grid; place-items: center; width: 48px; }
.search { display: flex; align-items: center; width: 288px; background: #f2f2f2; border: 1px solid #bbb; padding: 0 1px 0 12px; gap: 10px; color: #333; font-size: 15px; }
.search input { flex: 1; }
.search input::placeholder { color: #444; opacity: 1; }
.task .tv { width: 51px; }
.task .ex { background: #a56a34; border-bottom: 2px solid #ff7a00; }
.task .ch, .task .xc, .task .rc { border-bottom: 2px solid #76b9ed; }
.task .ch { width: 40px; margin: 0 5px; }
.task .xc { background: #54656e; }
.task .rc { width: 40px; margin-left: 5px; }
.tray { display: flex; align-items: center; margin-left: auto; gap: 11px; font-size: 11px; }
.wt { font-size: 13px; white-space: nowrap; margin: 0 12px 0 -4px; }
.clock { display: flex; flex-direction: column; align-items: center; line-height: 18px; }
.notif { position: relative; margin: 0 11px 0 9px; }
.notif b { position: absolute; left: 7px; top: 9px; width: 16px; height: 16px; border-radius: 50%; background: #333; border: 1px solid #999; font-size: 10px; line-height: 14px; text-align: center; }
.cop { position: relative; }
.cop b { position: absolute; left: 5px; top: 13px; background: #ffd21a; color: #000; font-size: 7px; line-height: 7px; padding: 0 1px; border-radius: 1px; }
.desk { width: 5px; height: 40px; border-left: 1px solid #78828c; margin-left: 6px; }
```
FILE: app.js
```javascript
const widths = [64, 29, 47, 64, 51, 11, 118, 11, 70, 11, 65, 51, 51, 51, 51, 51, 24, 51, 51, 51, 51];
document.getElementById('cols').innerHTML =
  widths.map(w => `<col style="width:${w}px">`).join('') + '<col>';

// últimos 20, bola, sorteios, representação, grupo
const balls = `4 04 461 7,2 1|2 49 445 6,9 1|1 26 443 6,9 1|2 52 439 6,8 1|4 31 434 6,7 1|1 16 433 6,7 1|2 39 433 6,7 1|2 44 432 6,7 1|1 53 431 6,7 1|0 29 428 6,6 1|0 42 425 6,6 1|2 15 424 6,6 1|2 56 424 6,6 1|1 73 423 6,6 1|2 61 423 6,6 1|2 05 422 6,5 1|2 09 420 6,5 1|0 37 419 6,5 1|0 10 418 6,5 1|1 18 418 6,5 1|2 54 417 6,5 2|0 66 417 6,5 2|1 40 417 6,5 2|1 38 417 6,5 2|2 33 416 6,5 2|0 13 414 6,4 2`
  .split('|').map(r => r.split(' '));

// dia, cinco bolas, percentuais dos quatro grupos
const draws = `06 04 11 39 63 77 40 0 60 0|07 07 21 40 68 74 0 40 20 40|08 04 09 48 56 58 60 0 0 40|09 17 20 34 44 46 20 0 40 40|10 03 15 50 60 76 20 20 20 40|11 09 24 44 52 75 60 20 20 0|13 03 31 62 64 80 20 20 40 20|14 04 15 32 61 73 80 0 0 20|15 11 16 22 75 77 20 20 40 20|16 26 31 33 50 78 40 20 20 20|17 04 30 31 48 72 40 20 0 40|18 33 48 58 60 76 0 40 20 40|20 43 48 50 52 56 40 0 20 40|21 22 43 54 64 69 0 40 40 20|22 03 54 57 61 75 20 40 0 40|23 05 18 39 41 65 60 0 0 40|24 11 12 23 49 57 20 20 20 40|25 05 07 31 43 63 40 0 60 0|27 12 23 36 51 71 0 40 40 20|28 27 38 49 53 68 40 20 20 20`
  .split('|').map(r => r.split(' '));

const td = (text, cls = '', span = 1) => `<td class="${cls}" colspan="${span}">${text}</td>`;
const th = (text, cls = '', span = 1) => `<th class="c h ${cls}" colspan="${span}">${text}</th>`;
const gap = (span = 1, cls = '') => td('', cls, span);
const groups = [1, 2, 3, 4].map(n => td(n, 'c g' + n)).join('');
const totals = (label, vals, cls) =>
  td(label, 'c ' + cls, 2) + vals.map(v => td(v + '%', 'c ' + cls)).join('');

let html = `<tr>${gap(17, 'e')}${th('% de Nº por Grupo', 'k', 4)}${gap()}</tr>`;
html += '<tr>' + ['Últimos 20', 'Bola', 'Sorteios', 'Repres.', 'Grupo'].map(t => th(t)).join('') +
  gap(1, 'e f') + th('Dezenas Selecionadas', 'k') + gap(1, 'e f') + th('Qtd. Fixas', 'k') + gap(1, 'e f') +
  ['Data', 'bola 1', 'bola 2', 'bola 3', 'bola 4', 'bola 5'].map(t => th(t)).join('') +
  gap(1, 'e f') + groups + gap(1, 'f') + '</tr>';

balls.forEach(([last, ball, count, share, group], i) => {
  let row = td(last, 'c gray') + td(ball, 'c' + (+ball <= 12 ? ' blue' : '')) + td(count, 'c') +
    td(share + '%', 'c') + td(group, 'c g' + group);
  row += gap(1, i < 12 ? 'e' : '');
  if (i < 12) row += td(i + 1, 'c' + (i < 3 ? ' peach' : ''));
  else if (i === 12) row += td('<button class="xl over combi">Combinação</button>');
  else if (i === 14) row += td('<button class="xl over limpar">Limpar</button>');
  else if (i === 16) row += td('<span class="over pick"></span>');
  else row += gap();

  if (i < 20) {
    const [day, ...n] = draws[i];
    row += gap(1, i < 1 ? 'e' : '') + td(i < 1 ? '3' : '', i < 1 ? 'c peach' : '') + gap(1, 'e') +
      td(day + '/05/2024', 'c') +
      n.slice(0, 5).map(v => td(v, 'c' + (+v <= 12 ? ' hit' : ''))).join('') + gap(1, 'e') +
      n.slice(5).map(v => td(v + '%', 'c')).join('') + gap();
  } else if (i === 20) {
    row += gap(8) + totals('MÉDIA GERAL', [31, 18, 24, 27], 'navy') + gap();
  } else if (i === 21) {
    row += gap(3) + td('% de Nº por Grupo', 'c navy', 4) + gap() + totals('ÚLTIMOS 10', [26, 22, 22, 30], 'hit') + gap();
  } else if (i === 22) {
    row += gap(3, 'e') + groups + gap() + totals('ÚLTIMOS 5', [32, 16, 28, 24], 'brown') + gap();
  } else if (i === 23) {
    row += td('MINHA SELEÇÃO', 'c brown', 3) + [33, 17, 33, 17].map(v => td(v + '%', 'c brown')).join('') + gap(8);
  } else {
    row += gap(15);
  }
  html += `<tr>${row}</tr>`;
});
document.getElementById('rows').innerHTML = html;
```
